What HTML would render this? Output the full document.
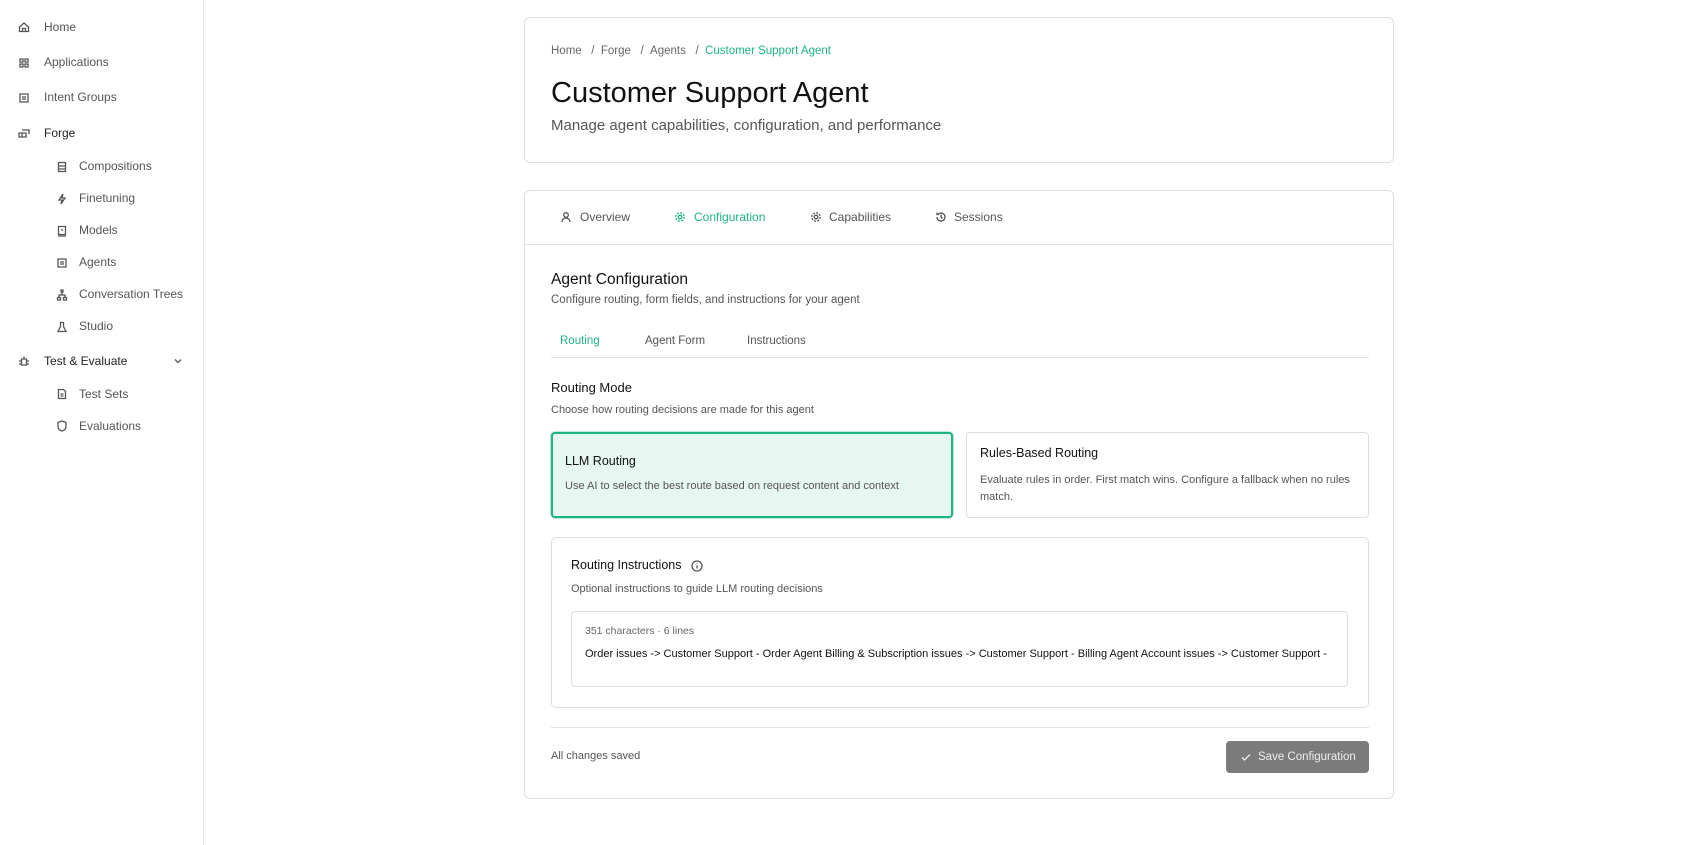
<!DOCTYPE html>
<html><head><meta charset="utf-8"><style>
*{box-sizing:border-box;margin:0;padding:0}
body{width:1698px;height:845px;background:#fff;font-family:"Liberation Sans",sans-serif;color:#222;position:relative;overflow:hidden}
.a{position:absolute;white-space:nowrap}
.side{position:absolute;left:0;top:0;width:204px;height:845px;border-right:1px solid #e5e5e5}
.si{position:absolute;font-size:12px;color:#555;line-height:14px}
.ic{position:absolute;width:12px;height:12px}
.card{position:absolute;border:1px solid #dedede;border-radius:6px;background:#fff}
.g{color:#1fb383}
svg{stroke:#555;fill:none;stroke-width:1.3}
</style></head><body>
<div class="side">
<svg class="ic" style="left:18px;top:21px" viewBox="0 0 12 12"><path d="M1.5 6L6 2l4.5 4v4.5h-9z M4.5 10.5v-3h3v3"/></svg>
<div class="si" style="left:44px;top:20px">Home</div>
<svg class="ic" style="left:18px;top:57px" viewBox="0 0 12 12"><path d="M2 2h3v3H2zM7 2h3v3H7zM2 7h3v3H2zM7 7h3v3H7z"/></svg>
<div class="si" style="left:44px;top:55px">Applications</div>
<svg class="ic" style="left:18px;top:92px" viewBox="0 0 12 12"><path d="M2 2h8v8H2zM4 5h4M4 7h4"/></svg>
<div class="si" style="left:44px;top:90px">Intent Groups</div>
<svg class="ic" style="left:18px;top:127px" viewBox="0 0 12 12"><path d="M1 6h7v4H1zM4 3h7v4M4 6v4"/></svg>
<div class="si" style="left:44px;top:126px;color:#222">Forge</div>
<svg class="ic" style="left:56px;top:161px" viewBox="0 0 12 12"><path d="M2.5 1.5h7v9h-7zM2.5 5h7M2.5 8h7"/></svg>
<div class="si" style="left:79px;top:159px">Compositions</div>
<svg class="ic" style="left:56px;top:193px" viewBox="0 0 12 12"><path d="M7 1L3 7h3l-1 4 4-6H6z"/></svg>
<div class="si" style="left:79px;top:191px">Finetuning</div>
<svg class="ic" style="left:56px;top:225px" viewBox="0 0 12 12"><path d="M2.5 1.5h7v8h-7zM2 11h8M5 5h2"/></svg>
<div class="si" style="left:79px;top:223px">Models</div>
<svg class="ic" style="left:56px;top:257px" viewBox="0 0 12 12"><path d="M2 2h8v8H2zM4 5h4M4 7h4"/></svg>
<div class="si" style="left:79px;top:255px">Agents</div>
<svg class="ic" style="left:56px;top:289px" viewBox="0 0 12 12"><path d="M5 1h2v2H5zM1.5 8.5h3v2.5h-3zM7.5 8.5h3v2.5h-3zM6 3v3M3 8.5V6h6v2.5"/></svg>
<div class="si" style="left:79px;top:287px">Conversation Trees</div>
<svg class="ic" style="left:56px;top:321px" viewBox="0 0 12 12"><path d="M4 1.5h4M4.5 1.5v4L2 10.5h8L7.5 5.5v-4"/></svg>
<div class="si" style="left:79px;top:319px">Studio</div>
<svg class="ic" style="left:18px;top:355px" viewBox="0 0 12 12"><path d="M3.5 4h5v6h-5zM6 4V1.5M1 6h2.5M8.5 6H11M1 9h2.5M8.5 9H11"/></svg>
<div class="si" style="left:44px;top:354px;color:#222">Test &amp; Evaluate</div>
<svg class="ic" style="left:172px;top:355px" viewBox="0 0 12 12"><path d="M3 4.5l3 3 3-3"/></svg>
<svg class="ic" style="left:56px;top:388px" viewBox="0 0 12 12"><path d="M2.5 1.5h5l2 2v7h-7zM4.5 6h3M4.5 8h3"/></svg>
<div class="si" style="left:79px;top:387px">Test Sets</div>
<svg class="ic" style="left:56px;top:420px" viewBox="0 0 12 12"><path d="M6 1l4 1.5v4c0 2.5-2 4-4 4.5-2-.5-4-2-4-4.5v-4z"/></svg>
<div class="si" style="left:79px;top:419px">Evaluations</div>
</div>

<div class="card" style="left:524px;top:17px;width:870px;height:146px">
<div class="a" style="left:26px;top:27px;font-size:11.5px;color:#666">Home &nbsp;&nbsp;/&nbsp;&nbsp;Forge &nbsp;&nbsp;/&nbsp;&nbsp;Agents &nbsp;&nbsp;/&nbsp;&nbsp;<span class="g">Customer Support Agent</span></div>
<div class="a" style="left:26px;top:59px;font-size:29px;color:#111">Customer Support Agent</div>
<div class="a" style="left:26px;top:99px;font-size:15px;color:#555">Manage agent capabilities, configuration, and performance</div>
</div>

<div class="card" style="left:524px;top:190px;width:870px;height:609px">
<div style="position:absolute;left:0;right:0;top:53px;border-top:1px solid #e2e2e2"></div>
<svg class="ic" style="left:35px;top:20px" viewBox="0 0 12 12"><circle cx="6" cy="4" r="2.3"/><path d="M2 11c0-2.5 2-4 4-4s4 1.5 4 4"/></svg>
<div class="a" style="left:55px;top:19px;font-size:12px;color:#555">Overview</div>
<svg class="ic" style="left:149px;top:20px;stroke:#1fb383" viewBox="0 0 12 12"><circle cx="6" cy="6" r="1.8"/><circle cx="6" cy="6" r="4.2" stroke-dasharray="2 1.3"/></svg>
<div class="a g" style="left:169px;top:19px;font-size:12px">Configuration</div>
<svg class="ic" style="left:285px;top:20px" viewBox="0 0 12 12"><circle cx="6" cy="6" r="1.8"/><circle cx="6" cy="6" r="4.2" stroke-dasharray="2 1.3"/></svg>
<div class="a" style="left:304px;top:19px;font-size:12px;color:#555">Capabilities</div>
<svg class="ic" style="left:410px;top:20px" viewBox="0 0 12 12"><path d="M2 6a4 4 0 1 0 1.2-2.8M2 1.5v2h2M6 3.5V6l1.5 1.5"/></svg>
<div class="a" style="left:429px;top:19px;font-size:12px;color:#555">Sessions</div>

<div class="a" style="left:26px;top:80px;font-size:15.5px;color:#111">Agent Configuration</div>
<div class="a" style="left:26px;top:103px;font-size:11.5px;color:#555">Configure routing, form fields, and instructions for your agent</div>
<div class="a g" style="left:35px;top:144px;font-size:11.5px">Routing</div>
<div class="a" style="left:120px;top:144px;font-size:11.5px;color:#555">Agent Form</div>
<div class="a" style="left:222px;top:144px;font-size:11.5px;color:#555">Instructions</div>
<div style="position:absolute;left:26px;width:818px;top:166px;border-top:1px solid #e2e2e2"></div>
<div class="a" style="left:26px;top:189px;font-size:13px;color:#111">Routing Mode</div>
<div class="a" style="left:26px;top:213px;font-size:11px;color:#555">Choose how routing decisions are made for this agent</div>

<div style="position:absolute;left:26px;top:241px;width:402px;height:86px;border:2px solid #1fb383;border-radius:4px;background:#e6f6f1;box-shadow:0 0 0 1px #bfe9da"></div>
<div class="a" style="left:40px;top:263px;font-size:12.5px;color:#111">LLM Routing</div>
<div class="a" style="left:40px;top:289px;font-size:11px;color:#555">Use AI to select the best route based on request content and context</div>
<div style="position:absolute;left:441px;top:241px;width:403px;height:86px;border:1px solid #dedede;border-radius:4px"></div>
<div class="a" style="left:455px;top:255px;font-size:12.5px;color:#111">Rules-Based Routing</div>
<div class="a" style="left:455px;top:281px;font-size:11px;color:#555;line-height:17px;white-space:normal;width:370px">Evaluate rules in order. First match wins. Configure a fallback when no rules match.</div>

<div style="position:absolute;left:26px;top:346px;width:818px;height:171px;border:1px solid #dedede;border-radius:5px"></div>
<div class="a" style="left:46px;top:367px;font-size:12.5px;color:#111">Routing Instructions</div>
<svg class="ic" style="left:166px;top:369px" viewBox="0 0 12 12"><circle cx="6" cy="6" r="5"/><path d="M6 5.5v3M6 3.5v.5"/></svg>
<div class="a" style="left:46px;top:392px;font-size:11px;color:#555">Optional instructions to guide LLM routing decisions</div>
<div style="position:absolute;left:46px;top:420px;width:777px;height:76px;border:1px solid #dedede;border-radius:4px;overflow:hidden">
<div class="a" style="left:13px;top:13px;font-size:10.5px;color:#666">351 characters · 6 lines</div>
<div class="a" style="left:13px;top:36px;font-size:11px;color:#111">Order issues -&gt; Customer Support - Order Agent Billing &amp; Subscription issues -&gt; Customer Support - Billing Agent Account issues -&gt; Customer Support -</div>
</div>
<div style="position:absolute;left:26px;width:818px;top:536px;border-top:1px solid #e2e2e2"></div>
<div class="a" style="left:26px;top:559px;font-size:11px;color:#555">All changes saved</div>
<div style="position:absolute;left:701px;top:550px;width:143px;height:32px;background:#7b7b7b;border-radius:4px;color:#eee;font-size:11.5px;line-height:32px;padding-left:32px">Save Configuration</div>
<svg class="ic" style="left:715px;top:560px;stroke:#eee" viewBox="0 0 12 12"><path d="M2 6.5l2.5 2.5L10 3.5"/></svg>
</div>
</body></html>
